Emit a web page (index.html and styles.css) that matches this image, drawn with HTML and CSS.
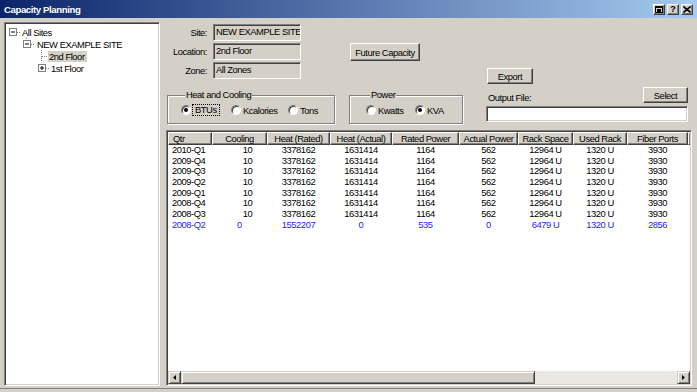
FILE: index.html
```html
<!DOCTYPE html>
<html lang="en">
<head>
    <meta charset="UTF-8">
    <meta name="viewport" content="width=device-width, initial-scale=1.0">
    <title>Capacity Planning</title>
    <link rel="stylesheet" href="styles.css">
</head>
<body>

<div class="window">
    <div class="titlebar">
        <span class="title">Capacity Planning</span>
        <div class="caption-buttons">
            <span class="cap-btn">
                <svg width="8" height="7" viewBox="0 0 8 7"><rect x="0.5" y="0.5" width="7" height="6" fill="none" stroke="#000"/><rect x="0" y="0" width="8" height="2" fill="#000"/><rect x="2" y="3" width="4" height="3" fill="#000"/></svg>
            </span>
            <span class="cap-btn help">?</span>
            <span class="cap-btn">
                <svg width="8" height="7" viewBox="0 0 8 7"><path d="M0.5 0.5 L7.5 6.5 M7.5 0.5 L0.5 6.5" stroke="#000" stroke-width="1.6"/></svg>
            </span>
        </div>
    </div>

    <div class="client">
        <!-- site tree -->
        <div class="tree">
            <div class="node">
                <svg width="15" height="12"><rect x="3.5" y="2.5" width="7" height="7" fill="#fff" stroke="#808080"/><path d="M5 6h4" stroke="#000"/><path d="M11 6.5h3" stroke="#808080" stroke-dasharray="1 1"/></svg>
                <span class="label">All Sites</span>
            </div>
            <div class="node">
                <svg width="30" height="12"><path d="M20.5 0v2" stroke="#808080" stroke-dasharray="1 1"/><rect x="17.5" y="2.5" width="7" height="7" fill="#fff" stroke="#808080"/><path d="M19 6h4" stroke="#000"/><path d="M25 6.5h4" stroke="#808080" stroke-dasharray="1 1"/></svg>
                <span class="label">NEW EXAMPLE SITE</span>
            </div>
            <div class="node">
                <svg width="42" height="12"><path d="M35.5 0v12 M36 6.5h6" stroke="#808080" stroke-dasharray="1 1"/></svg>
                <span class="label selected">2nd Floor</span>
            </div>
            <div class="node">
                <svg width="44" height="12"><rect x="32.5" y="2.5" width="7" height="7" fill="#fff" stroke="#808080"/><path d="M34 6h4 M36 4v4" stroke="#000"/><path d="M40 6.5h3" stroke="#808080" stroke-dasharray="1 1"/></svg>
                <span class="label">1st Floor</span>
            </div>
        </div>

        <div class="main">
            <div class="top">
                <div class="col-left">
                    <div class="fields">
                        <span class="field-label">Site:</span>
                        <div class="field readonly">NEW EXAMPLE SITE</div>
                        <span class="field-label">Location:</span>
                        <div class="field readonly">2nd Floor</div>
                        <span class="field-label">Zone:</span>
                        <div class="field readonly">All Zones</div>
                    </div>
                    <fieldset class="group heat">
                        <legend>Heat and Cooling</legend>
                        <div class="options">
                            <span class="opt"><span class="radio checked"></span><span class="focus">BTUs</span></span>
                            <span class="opt"><span class="radio"></span>Kcalories</span>
                            <span class="opt"><span class="radio"></span>Tons</span>
                        </div>
                    </fieldset>
                </div>

                <div class="col-mid">
                    <button class="btn future">Future Capacity</button>
                    <fieldset class="group power">
                        <legend>Power</legend>
                        <div class="options">
                            <span class="opt"><span class="radio"></span>Kwatts</span>
                            <span class="opt"><span class="radio checked"></span>KVA</span>
                        </div>
                    </fieldset>
                </div>

                <div class="col-right">
                    <button class="btn export">Export</button>
                    <div class="output-row">
                        <span class="output-label">Output File:</span>
                        <button class="btn select">Select</button>
                    </div>
                    <div class="field output"></div>
                </div>
            </div>

            <!-- capacity list -->
            <div class="listview">
                <div class="lv-header cols">
                    <span class="hd qtr">Qtr</span>
                    <span class="hd">Cooling</span>
                    <span class="hd">Heat (Rated)</span>
                    <span class="hd">Heat (Actual)</span>
                    <span class="hd">Rated Power</span>
                    <span class="hd">Actual Power</span>
                    <span class="hd">Rack Space</span>
                    <span class="hd">Used Rack</span>
                    <span class="hd">Fiber Ports</span>
                    <span class="hd filler"></span>
                </div>
                <div class="lv-body" id="rows"></div>
                <div class="hscroll">
                    <span class="sb-btn"><svg width="3" height="5" viewBox="0 0 3 5"><path d="M3 0v5L0 2.5z" fill="#000"/></svg></span>
                    <span class="sb-thumb"></span>
                    <span class="sb-track"></span>
                    <span class="sb-btn"><svg width="3" height="5" viewBox="0 0 3 5"><path d="M0 0v5l3-2.5z" fill="#000"/></svg></span>
                </div>
            </div>
        </div>
    </div>
</div>

<script>
    const rows = [
        ['2010-Q1', 10, 3378162, 1631414, 1164, 562, '12964 U', '1320 U', 3930],
        ['2009-Q4', 10, 3378162, 1631414, 1164, 562, '12964 U', '1320 U', 3930],
        ['2009-Q3', 10, 3378162, 1631414, 1164, 562, '12964 U', '1320 U', 3930],
        ['2009-Q2', 10, 3378162, 1631414, 1164, 562, '12964 U', '1320 U', 3930],
        ['2009-Q1', 10, 3378162, 1631414, 1164, 562, '12964 U', '1320 U', 3930],
        ['2008-Q4', 10, 3378162, 1631414, 1164, 562, '12964 U', '1320 U', 3930],
        ['2008-Q3', 10, 3378162, 1631414, 1164, 562, '12964 U', '1320 U', 3930],
        ['2008-Q2', 0, 1552207, 0, 535, 0, '6479 U', '1320 U', 2856, 'projected']
    ];

    const body = document.getElementById('rows');
    rows.forEach(r => {
        const row = document.createElement('div');
        row.className = 'row cols';
        if (r[9]) row.classList.add(r[9]);
        for (let i = 0; i < 9; i++) {
            const cell = document.createElement('span');
            cell.textContent = r[i];
            if (i === 0) cell.className = 'qtr';
            if (i === 1) cell.className = 'cooling';
            row.appendChild(cell);
        }
        body.appendChild(row);
    });
</script>

</body>
</html>
```

FILE: styles.css
```css
body {
    margin: 0;
    background-color: #d4d0c8;
    font-family: "Liberation Sans", Arial, sans-serif;
    font-size: 9.4px;
    letter-spacing: -0.45px;
    color: #000;
}

.window {
    width: 697px;
    height: 392px;
    box-sizing: border-box;
    display: flex;
    flex-direction: column;
    overflow: hidden;
    padding-bottom: 3px;
}

/* title bar */
.titlebar {
    height: 18px;
    flex: none;
    display: flex;
    align-items: center;
    padding: 0 4px 0 4px;
    background: linear-gradient(to right, #0a246a, #a6caf0);
}

.title {
    color: #fff;
    font-weight: bold;
    font-size: 9.6px;
    letter-spacing: -0.4px;
    flex: 1;
}

.caption-buttons {
    display: flex;
    gap: 2px;
}

.cap-btn {
    width: 12px;
    height: 11px;
    box-sizing: border-box;
    background-color: #d4d0c8;
    border: 1px solid;
    border-color: #fff #404040 #404040 #fff;
    box-shadow: inset -1px -1px #808080;
    display: flex;
    align-items: center;
    justify-content: center;
}

.cap-btn.help {
    font-weight: bold;
    font-size: 9px;
    letter-spacing: 0;
    line-height: 9px;
}

/* client area */
.client {
    flex: 1;
    display: flex;
    gap: 6px;
    padding: 4px 5px 2px 4px;
    border-bottom: 1px solid #808080;
    min-height: 0;
}

.tree {
    width: 156px;
    box-sizing: border-box;
    background-color: #fff;
    border: 1px solid;
    border-color: #808080 #fff #fff #808080;
    box-shadow: inset 1px 1px #404040, inset -1px -1px #d4d0c8;
    padding: 3px 0 0 1px;
}

.node {
    display: flex;
    align-items: center;
    height: 12px;
}

.node svg {
    flex: none;
}

.node .label {
    line-height: 11px;
    padding: 0 1px;
}

.node .label.selected {
    background-color: #d4d0c8;
    padding: 0 2px 0 1px;
}

.main {
    width: 526px;
    display: flex;
    flex-direction: column;
}

.top {
    height: 108px;
    flex: none;
    display: flex;
}

.col-left {
    width: 169px;
}

.fields {
    display: grid;
    grid-template-columns: 41px 88px;
    grid-auto-rows: 17px;
    column-gap: 6px;
    row-gap: 2px;
    margin-top: 2px;
}

.field-label {
    text-align: right;
    line-height: 17px;
}

.field {
    box-sizing: border-box;
    border: 1px solid;
    border-color: #808080 #fff #fff #808080;
    box-shadow: inset 1px 1px #404040, inset -1px -1px #d4d0c8;
    padding: 0 2px;
    line-height: 14px;
    white-space: nowrap;
    overflow: hidden;
}

.field.readonly {
    background-color: #d4d0c8;
}

.field.output {
    background-color: #fff;
    width: 202px;
    height: 16px;
    margin: 3px 0 0 1px;
}

/* group boxes */
.group {
    margin: 0;
    border: 1px solid #808080;
    box-shadow: inset 1px 1px #fff, 1px 1px #fff;
    padding: 3px 0 7px 0;
}

.group legend {
    padding: 0 1px;
    margin-left: 4px;
    line-height: 12px;
    background-color: #d4d0c8;
}

.heat {
    margin: 10px 0 0 1px;
    width: 168px;
    box-sizing: border-box;
    padding-left: 13px;
}

.power {
    margin-top: 28px;
    width: 114px;
    box-sizing: border-box;
    padding-left: 16px;
}

.options {
    display: flex;
    height: 12px;
    align-items: center;
}

.heat .opt:nth-child(1) { width: 50px; }
.heat .opt:nth-child(2) { width: 57px; }
.power .opt:nth-child(1) { width: 49px; }

.opt {
    display: flex;
    align-items: center;
    gap: 2px;
}

.radio {
    width: 10px;
    height: 10px;
    flex: none;
    box-sizing: border-box;
    border-radius: 50%;
    background-color: #fff;
    border: 1px solid;
    border-color: #808080 #fff #fff #808080;
    box-shadow: inset 1px 1px #404040;
    display: flex;
    align-items: center;
    justify-content: center;
}

.radio.checked::after {
    content: "";
    width: 4px;
    height: 4px;
    border-radius: 50%;
    background-color: #000;
}

.focus {
    outline: 1px dotted #000;
    padding: 0 2px;
    line-height: 10px;
}

.col-mid {
    width: 114px;
    margin-left: 14px;
}

.col-right {
    width: 203px;
    margin-left: 22px;
}

/* push buttons */
.btn {
    font: inherit;
    letter-spacing: inherit;
    color: #000;
    background-color: #d4d0c8;
    border: 1px solid;
    border-color: #fff #404040 #404040 #fff;
    box-shadow: inset -1px -1px #808080;
    padding: 0;
    display: block;
    white-space: nowrap;
}

.future {
    width: 70px;
    height: 18px;
    margin: 21px 0 0 1px;
}

.export {
    width: 46px;
    height: 16px;
    margin: 46px 0 0 2px;
}

.output-row {
    display: flex;
    align-items: flex-end;
    margin-top: 3px;
    height: 16px;
}

.output-label {
    flex: 1;
    padding-left: 3px;
    line-height: 11px;
}

.select {
    width: 45px;
    height: 16px;
}

/* list view */
.listview {
    flex: 1;
    display: flex;
    flex-direction: column;
    background-color: #fff;
    border: 1px solid;
    border-color: #808080 #fff #fff #808080;
    box-shadow: inset 1px 1px #404040, inset -1px -1px #d4d0c8;
    padding: 1px;
    min-height: 0;
}

.cols {
    display: grid;
    grid-template-columns: 44px 55px 63px 62px 67px 59px 55px 54px 61px 1fr;
}

.lv-header {
    height: 13px;
    flex: none;
}

.hd {
    box-sizing: border-box;
    background-color: #d4d0c8;
    border-top: 1px solid #fff;
    border-left: 1px solid #fff;
    border-right: 1px solid #404040;
    border-bottom: 1px solid #404040;
    box-shadow: inset -1px -1px #808080;
    text-align: center;
    line-height: 11px;
    white-space: nowrap;
    overflow: hidden;
}

.hd.qtr {
    text-align: left;
    padding-left: 4px;
}

.hd.filler {
    border-right: none;
}

.lv-body {
    flex: 1;
}

.row {
    height: 10.67px;
    line-height: 10.67px;
}

.row span {
    text-align: center;
    white-space: nowrap;
}

.row .qtr {
    text-align: left;
    padding-left: 4px;
}

.row .cooling {
    padding-left: 16px;
}

.row.projected {
    color: #2323ff;
}

.row.projected .cooling {
    padding-left: 0;
}

.hscroll {
    height: 13px;
    flex: none;
    display: flex;
}

.sb-btn {
    width: 13px;
    box-sizing: border-box;
    background-color: #d4d0c8;
    border: 1px solid;
    border-color: #d4d0c8 #404040 #404040 #d4d0c8;
    box-shadow: inset 1px 1px #fff, inset -1px -1px #808080;
    display: flex;
    align-items: center;
    justify-content: center;
}

.sb-thumb {
    width: 354px;
    box-sizing: border-box;
    background-color: #d4d0c8;
    border: 1px solid;
    border-color: #d4d0c8 #404040 #404040 #d4d0c8;
    box-shadow: inset 1px 1px #fff, inset -1px -1px #808080;
}

.sb-track {
    flex: 1;
    background-color: #eae8e3;
}
```
